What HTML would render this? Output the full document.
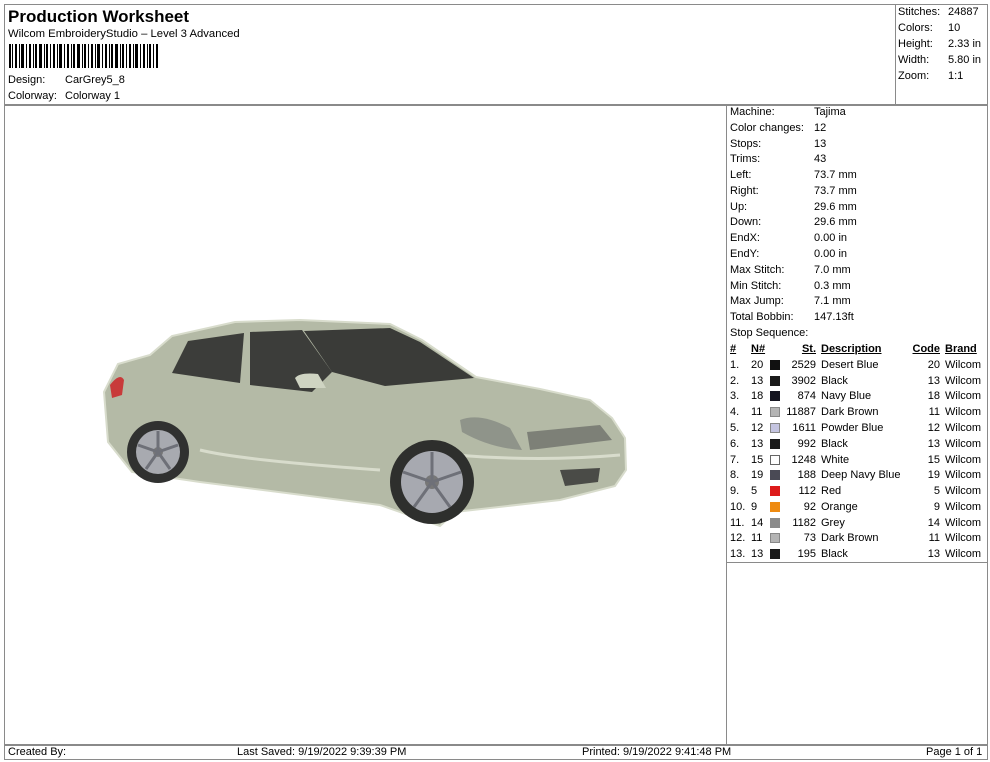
<!DOCTYPE html>
<html><head><meta charset="utf-8"><style>
body{margin:0;width:990px;height:762px;background:#fff;position:relative;overflow:hidden;font-family:"Liberation Sans",Arial,sans-serif;font-size:11px;color:#000}
.a{position:absolute;white-space:nowrap;line-height:13px;margin-top:1px}
.l{position:absolute;background:#8a8a8a}
.r{text-align:right}
.sw{position:absolute;width:10px;height:10px;box-sizing:border-box;margin-top:1px}
u{text-decoration:underline}
</style></head><body>
<div class="l" style="left:4px;top:4px;width:984px;height:1px"></div>
<div class="l" style="left:4px;top:4px;width:1px;height:756px"></div>
<div class="l" style="left:987px;top:4px;width:1px;height:756px"></div>
<div class="l" style="left:4px;top:759px;width:984px;height:1px"></div>
<div class="l" style="left:4px;top:104px;width:984px;height:2px"></div>
<div class="l" style="left:895px;top:4px;width:1px;height:100px"></div>
<div class="l" style="left:726px;top:106px;width:1px;height:638px"></div>
<div class="l" style="left:726px;top:562px;width:262px;height:1px"></div>
<div class="l" style="left:4px;top:744px;width:984px;height:2px"></div>

<div class="a" style="left:8px;top:6px;font-size:17px;font-weight:bold;line-height:19px">Production Worksheet</div>
<div class="a" style="left:8px;top:27px;font-size:11.3px">Wilcom EmbroideryStudio – Level 3 Advanced</div>
<svg style="position:absolute;left:9px;top:44px" width="150" height="24">
<g fill="#000">
<rect x="0" width="2" height="24"/><rect x="3" width="1" height="24"/><rect x="6" width="2" height="24"/><rect x="10" width="1" height="24"/><rect x="12" width="3" height="24"/><rect x="17" width="1" height="24"/><rect x="20" width="2" height="24"/><rect x="24" width="1" height="24"/><rect x="26" width="2" height="24"/><rect x="30" width="3" height="24"/><rect x="35" width="1" height="24"/><rect x="37" width="2" height="24"/><rect x="41" width="1" height="24"/><rect x="44" width="2" height="24"/><rect x="48" width="1" height="24"/><rect x="50" width="3" height="24"/><rect x="55" width="1" height="24"/><rect x="58" width="2" height="24"/><rect x="62" width="1" height="24"/><rect x="64" width="2" height="24"/><rect x="68" width="3" height="24"/><rect x="73" width="1" height="24"/><rect x="75" width="2" height="24"/><rect x="79" width="1" height="24"/><rect x="82" width="2" height="24"/><rect x="86" width="1" height="24"/><rect x="88" width="3" height="24"/><rect x="93" width="1" height="24"/><rect x="96" width="2" height="24"/><rect x="100" width="1" height="24"/><rect x="102" width="2" height="24"/><rect x="106" width="3" height="24"/><rect x="111" width="1" height="24"/><rect x="113" width="2" height="24"/><rect x="117" width="1" height="24"/><rect x="120" width="2" height="24"/><rect x="124" width="1" height="24"/><rect x="126" width="3" height="24"/><rect x="131" width="1" height="24"/><rect x="134" width="2" height="24"/><rect x="138" width="1" height="24"/><rect x="140" width="2" height="24"/><rect x="144" width="1" height="24"/><rect x="147" width="2" height="24"/>
</g></svg>
<div class="a" style="left:8px;top:73px">Design:</div><div class="a" style="left:65px;top:73px">CarGrey5_8</div>
<div class="a" style="left:8px;top:89px">Colorway:</div><div class="a" style="left:65px;top:89px">Colorway 1</div>

<div class="a" style="left:898px;top:5px">Stitches:</div><div class="a" style="left:948px;top:5px">24887</div>
<div class="a" style="left:898px;top:21px">Colors:</div><div class="a" style="left:948px;top:21px">10</div>
<div class="a" style="left:898px;top:37px">Height:</div><div class="a" style="left:948px;top:37px">2.33 in</div>
<div class="a" style="left:898px;top:53px">Width:</div><div class="a" style="left:948px;top:53px">5.80 in</div>
<div class="a" style="left:898px;top:69px">Zoom:</div><div class="a" style="left:948px;top:69px">1:1</div>

<div class="a" style="left:730px;top:105px">Machine:</div><div class="a" style="left:814px;top:105px">Tajima</div>
<div class="a" style="left:730px;top:121px">Color changes:</div><div class="a" style="left:814px;top:121px">12</div>
<div class="a" style="left:730px;top:137px">Stops:</div><div class="a" style="left:814px;top:137px">13</div>
<div class="a" style="left:730px;top:152px">Trims:</div><div class="a" style="left:814px;top:152px">43</div>
<div class="a" style="left:730px;top:168px">Left:</div><div class="a" style="left:814px;top:168px">73.7 mm</div>
<div class="a" style="left:730px;top:184px">Right:</div><div class="a" style="left:814px;top:184px">73.7 mm</div>
<div class="a" style="left:730px;top:200px">Up:</div><div class="a" style="left:814px;top:200px">29.6 mm</div>
<div class="a" style="left:730px;top:215px">Down:</div><div class="a" style="left:814px;top:215px">29.6 mm</div>
<div class="a" style="left:730px;top:231px">EndX:</div><div class="a" style="left:814px;top:231px">0.00 in</div>
<div class="a" style="left:730px;top:247px">EndY:</div><div class="a" style="left:814px;top:247px">0.00 in</div>
<div class="a" style="left:730px;top:263px">Max Stitch:</div><div class="a" style="left:814px;top:263px">7.0 mm</div>
<div class="a" style="left:730px;top:279px">Min Stitch:</div><div class="a" style="left:814px;top:279px">0.3 mm</div>
<div class="a" style="left:730px;top:294px">Max Jump:</div><div class="a" style="left:814px;top:294px">7.1 mm</div>
<div class="a" style="left:730px;top:310px">Total Bobbin:</div><div class="a" style="left:814px;top:310px">147.13ft</div>
<div class="a" style="left:730px;top:326px">Stop Sequence:</div>

<div class="a" style="left:730px;top:342px;font-weight:bold"><u>#</u></div>
<div class="a" style="left:751px;top:342px;font-weight:bold"><u>N#</u></div>
<div class="a r" style="left:770px;width:46px;top:342px;font-weight:bold"><u>St.</u></div>
<div class="a" style="left:821px;top:342px;font-weight:bold"><u>Description</u></div>
<div class="a r" style="left:900px;width:40px;top:342px;font-weight:bold"><u>Code</u></div>
<div class="a" style="left:945px;top:342px;font-weight:bold"><u>Brand</u></div>

<div class="a" style="left:730px;top:358px">1.</div><div class="a" style="left:751px;top:358px">20</div><div class="sw" style="left:770px;top:359px;background:#111"></div><div class="a r" style="left:770px;width:46px;top:358px">2529</div><div class="a" style="left:821px;top:358px">Desert Blue</div><div class="a r" style="left:900px;width:40px;top:358px">20</div><div class="a" style="left:945px;top:358px">Wilcom</div>
<div class="a" style="left:730px;top:374px">2.</div><div class="a" style="left:751px;top:374px">13</div><div class="sw" style="left:770px;top:375px;background:#1a1a1a"></div><div class="a r" style="left:770px;width:46px;top:374px">3902</div><div class="a" style="left:821px;top:374px">Black</div><div class="a r" style="left:900px;width:40px;top:374px">13</div><div class="a" style="left:945px;top:374px">Wilcom</div>
<div class="a" style="left:730px;top:389px">3.</div><div class="a" style="left:751px;top:389px">18</div><div class="sw" style="left:770px;top:390px;background:#151520"></div><div class="a r" style="left:770px;width:46px;top:389px">874</div><div class="a" style="left:821px;top:389px">Navy Blue</div><div class="a r" style="left:900px;width:40px;top:389px">18</div><div class="a" style="left:945px;top:389px">Wilcom</div>
<div class="a" style="left:730px;top:405px">4.</div><div class="a" style="left:751px;top:405px">11</div><div class="sw" style="left:770px;top:406px;background:#b4b4b4;border:1px solid #888"></div><div class="a r" style="left:770px;width:46px;top:405px">11887</div><div class="a" style="left:821px;top:405px">Dark Brown</div><div class="a r" style="left:900px;width:40px;top:405px">11</div><div class="a" style="left:945px;top:405px">Wilcom</div>
<div class="a" style="left:730px;top:421px">5.</div><div class="a" style="left:751px;top:421px">12</div><div class="sw" style="left:770px;top:422px;background:#c4c4e0;border:1px solid #888"></div><div class="a r" style="left:770px;width:46px;top:421px">1611</div><div class="a" style="left:821px;top:421px">Powder Blue</div><div class="a r" style="left:900px;width:40px;top:421px">12</div><div class="a" style="left:945px;top:421px">Wilcom</div>
<div class="a" style="left:730px;top:437px">6.</div><div class="a" style="left:751px;top:437px">13</div><div class="sw" style="left:770px;top:438px;background:#1a1a1a"></div><div class="a r" style="left:770px;width:46px;top:437px">992</div><div class="a" style="left:821px;top:437px">Black</div><div class="a r" style="left:900px;width:40px;top:437px">13</div><div class="a" style="left:945px;top:437px">Wilcom</div>
<div class="a" style="left:730px;top:453px">7.</div><div class="a" style="left:751px;top:453px">15</div><div class="sw" style="left:770px;top:454px;background:#fff;border:1px solid #666"></div><div class="a r" style="left:770px;width:46px;top:453px">1248</div><div class="a" style="left:821px;top:453px">White</div><div class="a r" style="left:900px;width:40px;top:453px">15</div><div class="a" style="left:945px;top:453px">Wilcom</div>
<div class="a" style="left:730px;top:468px">8.</div><div class="a" style="left:751px;top:468px">19</div><div class="sw" style="left:770px;top:469px;background:#4a4a55"></div><div class="a r" style="left:770px;width:46px;top:468px">188</div><div class="a" style="left:821px;top:468px">Deep Navy Blue</div><div class="a r" style="left:900px;width:40px;top:468px">19</div><div class="a" style="left:945px;top:468px">Wilcom</div>
<div class="a" style="left:730px;top:484px">9.</div><div class="a" style="left:751px;top:484px">5</div><div class="sw" style="left:770px;top:485px;background:#dd1a1a"></div><div class="a r" style="left:770px;width:46px;top:484px">112</div><div class="a" style="left:821px;top:484px">Red</div><div class="a r" style="left:900px;width:40px;top:484px">5</div><div class="a" style="left:945px;top:484px">Wilcom</div>
<div class="a" style="left:730px;top:500px">10.</div><div class="a" style="left:751px;top:500px">9</div><div class="sw" style="left:770px;top:501px;background:#ee8a10"></div><div class="a r" style="left:770px;width:46px;top:500px">92</div><div class="a" style="left:821px;top:500px">Orange</div><div class="a r" style="left:900px;width:40px;top:500px">9</div><div class="a" style="left:945px;top:500px">Wilcom</div>
<div class="a" style="left:730px;top:516px">11.</div><div class="a" style="left:751px;top:516px">14</div><div class="sw" style="left:770px;top:517px;background:#8a8a8a"></div><div class="a r" style="left:770px;width:46px;top:516px">1182</div><div class="a" style="left:821px;top:516px">Grey</div><div class="a r" style="left:900px;width:40px;top:516px">14</div><div class="a" style="left:945px;top:516px">Wilcom</div>
<div class="a" style="left:730px;top:531px">12.</div><div class="a" style="left:751px;top:531px">11</div><div class="sw" style="left:770px;top:532px;background:#b4b4b4;border:1px solid #888"></div><div class="a r" style="left:770px;width:46px;top:531px">73</div><div class="a" style="left:821px;top:531px">Dark Brown</div><div class="a r" style="left:900px;width:40px;top:531px">11</div><div class="a" style="left:945px;top:531px">Wilcom</div>
<div class="a" style="left:730px;top:547px">13.</div><div class="a" style="left:751px;top:547px">13</div><div class="sw" style="left:770px;top:548px;background:#1a1a1a"></div><div class="a r" style="left:770px;width:46px;top:547px">195</div><div class="a" style="left:821px;top:547px">Black</div><div class="a r" style="left:900px;width:40px;top:547px">13</div><div class="a" style="left:945px;top:547px">Wilcom</div>

<div class="a" style="left:8px;top:745px">Created By:</div>
<div class="a" style="left:237px;top:745px">Last Saved: 9/19/2022 9:39:39 PM</div>
<div class="a" style="left:582px;top:745px">Printed: 9/19/2022 9:41:48 PM</div>
<div class="a" style="left:926px;top:745px">Page 1 of 1</div>

<svg style="position:absolute;left:0;top:0" width="726" height="744">
<polygon fill="#b4baa6" stroke="#d8dccc" stroke-width="2" points="118,364 150,355 172,336 235,322 300,320 390,324 422,340 476,377 540,389 590,400 612,418 625,438 626,470 615,486 560,500 455,512 440,526 380,505 200,482 132,472 108,442 104,392"/>
<polygon fill="#3c3d3a" points="172,373 188,341 244,333 240,383"/>
<polygon fill="#3c3d3a" points="250,385 250,332 302,330 332,372 312,392"/>
<polygon fill="#3a3b38" points="304,331 390,328 420,342 474,378 385,386 332,372"/>
<path d="M110,385 Q120,372 124,380 L122,395 L112,398Z" fill="#c83a3a"/>
<path d="M295,378 Q300,372 318,374 L326,388 L300,388Z" fill="#cfd4c2"/>
<path d="M200,450 Q240,460 380,470 M455,455 Q540,462 620,455" stroke="#d8dccc" stroke-width="3" fill="none"/>
<path d="M460,420 Q480,412 510,428 L522,450 Q490,448 462,432Z" fill="#8f948a"/>
<polygon fill="#7d8077" points="527,432 600,425 612,440 530,450"/>
<polygon fill="#4a4b47" points="560,470 600,468 598,482 565,486"/>
<circle cx="158" cy="452" r="31" fill="#303130"/>
<circle cx="158" cy="452" r="22" fill="#a8aab0"/>
<circle cx="158" cy="452" r="5" fill="#777"/>
<circle cx="432" cy="482" r="42" fill="#2e2f2d"/>
<circle cx="432" cy="482" r="31" fill="#a7a9b0"/>
<circle cx="432" cy="482" r="7" fill="#777"/>
<g stroke="#6e7078" stroke-width="3">
<path d="M432,482 L432,452 M432,482 L461,472 M432,482 L450,507 M432,482 L414,507 M432,482 L403,472"/>
<path d="M158,452 L158,431 M158,452 L178,445 M158,452 L170,469 M158,452 L146,469 M158,452 L138,445"/>
</g>
</svg>
</body></html>
